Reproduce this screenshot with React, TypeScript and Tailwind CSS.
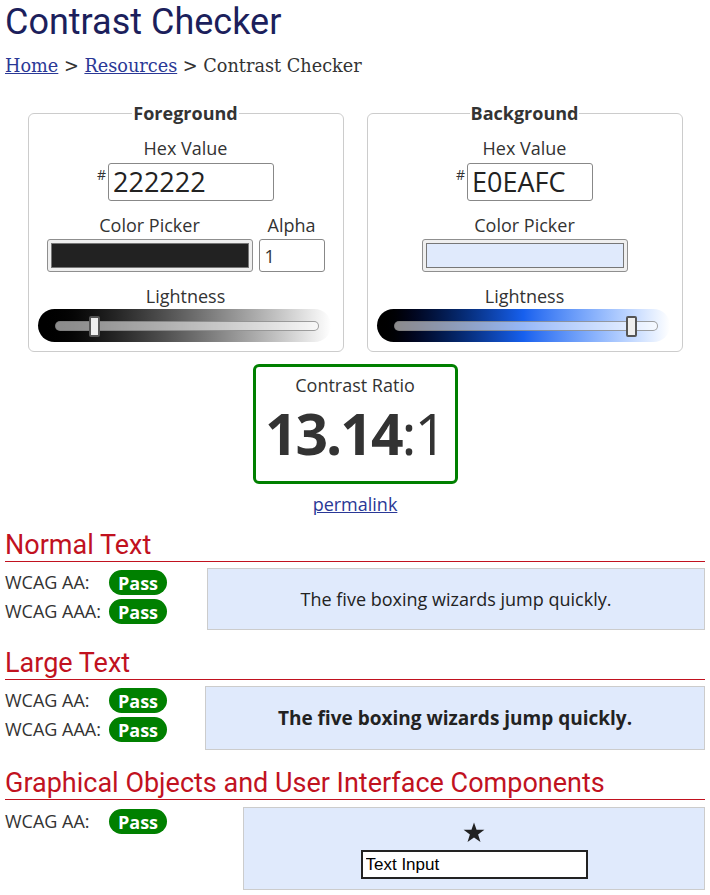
import React from 'react'

const sans = { fontFamily: '"Open Sans", "Liberation Sans", sans-serif' }

function Pass() {
  return (
    <span className="inline-flex items-center justify-center w-[58px] h-[25px] rounded-full bg-[#008000] text-white font-bold text-[18px] leading-none">
      Pass
    </span>
  )
}

function Row({ label }: { label: string }) {
  return (
    <div className="flex items-center h-[29px]">
      <span className="w-[104px] text-[18px] text-[#333]">{label}</span>
      <Pass />
    </div>
  )
}

function Heading({ children }: { children: React.ReactNode }) {
  return (
    <h2
      className="text-[27px] leading-[30px] text-[#c1121f] border-b border-[#c1121f] pb-[1px]"
      style={{ fontFamily: 'Roboto, "Liberation Sans", sans-serif' }}
    >
      {children}
    </h2>
  )
}

function Slider({ pos, blue }: { pos: number; blue?: boolean }) {
  return (
    <div
      className={
        'flex items-center h-[33px] rounded-full ml-[9px] mr-[12px] pl-[17px] pr-[12px] ' +
        (blue ? 'bg-linear-to-r from-black via-[#1760ee] to-white' : 'bg-linear-to-r from-black to-white')
      }
    >
      <div className="relative flex-1 h-[10px] rounded-full bg-white/55 border border-[#777]/70">
        <div
          className="absolute top-[-6px] w-[11px] h-[21px] rounded-[2px] bg-[#eee] border-2 border-[#555]"
          style={{ left: `${pos}%` }}
        />
      </div>
    </div>
  )
}

function Panel({
  title,
  hex,
  hexWidth,
  swatch,
  alpha,
  pos,
  blue,
}: {
  title: string
  hex: string
  hexWidth: string
  swatch: string
  alpha?: boolean
  pos: number
  blue?: boolean
}) {
  return (
    <fieldset className="border border-[#ccc] rounded-[6px] pb-[9px] min-w-0 text-[#333]">
      <legend className="mx-auto px-[1px] text-[18px] font-bold leading-[23px]">{title}</legend>
      <div className="text-center text-[18px] leading-[23px] mt-[12px]">Hex Value</div>
      <div className="flex justify-center items-start mt-[3px]">
        <span className="text-[14px] leading-none mt-[5px] mr-[2px]">#</span>
        <input
          readOnly
          value={hex}
          className={hexWidth + ' h-[38px] border border-[#888] rounded-[3px] text-[27px] px-[4px] text-[#222] outline-none'}
        />
      </div>
      <div className="flex justify-center gap-[6px] mt-[13px]">
        <div className="flex flex-col items-center">
          <span className="text-[18px] leading-[23px]">Color Picker</span>
          <div className="w-[206px] h-[33px] border border-[#8f8f8f] rounded-[3px] bg-[#efefef] p-[3px] mt-[2px]">
            <div className={'h-full border border-[#777] ' + swatch} />
          </div>
        </div>
        {alpha && (
          <div className="flex flex-col items-center">
            <span className="text-[18px] leading-[23px]">Alpha</span>
            <input
              readOnly
              value="1"
              className="w-[66px] h-[33px] border border-[#888] rounded-[3px] text-[18px] px-[5px] mt-[2px] outline-none"
            />
          </div>
        )}
      </div>
      <div className="text-center text-[18px] leading-[23px] mt-[13px]">Lightness</div>
      <div className="mt-[1px]">
        <Slider pos={pos} blue={blue} />
      </div>
    </fieldset>
  )
}

export default function App() {
  return (
    <div className="bg-white min-h-[895px] px-[5px] text-[#333]" style={sans}>
      <h1
        className="text-[36px] leading-[44px] text-[#1c1f5c]"
        style={{ fontFamily: 'Roboto, "Liberation Sans", sans-serif' }}
      >
        Contrast Checker
      </h1>
      <nav className="text-[17.7px] leading-[24px] mt-[10px] text-[#333]" style={{ fontFamily: '"DejaVu Serif", serif' }}>
        <a href="#" className="text-[#2a3896] underline">Home</a> &gt;{' '}
        <a href="#" className="text-[#2a3896] underline">Resources</a> &gt; Contrast Checker
      </nav>

      <div className="w-[655px] mx-auto grid grid-cols-2 gap-[23px] mt-[24px]">
        <Panel title="Foreground" hex="222222" hexWidth="w-[166px]" swatch="bg-[#222]" alpha pos={12.6} />
        <Panel title="Background" hex="E0EAFC" hexWidth="w-[126px]" swatch="bg-[#e0eafc]" pos={88.5} blue />
      </div>

      <div className="flex flex-col items-center mt-[12px]">
        <div className="w-[205px] h-[120px] border-[3px] border-[#008000] rounded-[6px] flex flex-col items-center pt-[7px]">
          <span className="text-[18px] leading-[23px]">Contrast Ratio</span>
          <span className="text-[57px] leading-[64px] tracking-[-0.035em] mt-[4px]">
            <b>13.14</b>:1
          </span>
        </div>
        <a href="#" className="text-[18px] leading-[24px] text-[#2a3896] underline mt-[8px]">permalink</a>
      </div>

      <section className="mt-[14px]">
        <Heading>Normal Text</Heading>
        <div className="flex mt-[6px]">
          <div className="flex flex-col">
            <Row label="WCAG AA:" />
            <Row label="WCAG AAA:" />
          </div>
          <div className="ml-[40px] flex-1 h-[62px] bg-[#e0eafc] border border-[#ccc] flex items-center justify-center text-[18px] text-[#222]">
            The five boxing wizards jump quickly.
          </div>
        </div>
      </section>

      <section className="mt-[18px]">
        <Heading>Large Text</Heading>
        <div className="flex mt-[6px]">
          <div className="flex flex-col">
            <Row label="WCAG AA:" />
            <Row label="WCAG AAA:" />
          </div>
          <div className="ml-[38px] flex-1 h-[64px] bg-[#e0eafc] border border-[#ccc] flex items-center justify-center text-[19px] font-bold text-[#222]">
            The five boxing wizards jump quickly.
          </div>
        </div>
      </section>

      <section className="mt-[18px]">
        <Heading>Graphical Objects and User Interface Components</Heading>
        <div className="flex mt-[7px]">
          <div className="flex flex-col">
            <Row label="WCAG AA:" />
          </div>
          <div className="ml-[76px] flex-1 h-[83px] bg-[#e0eafc] border border-[#ccc] flex flex-col items-center pt-[14px]">
            <svg width="22" height="21" viewBox="0 0 24 23" className="text-[#222]">
              <path
                fill="currentColor"
                d="M12 0.5l2.8 8.1h8.6l-6.9 5.1 2.6 8.3-7.1-5.1-7.1 5.1 2.6-8.3-6.9-5.1h8.6z"
              />
            </svg>
            <input
              readOnly
              value="Text Input"
              className="w-[227px] h-[29px] mt-[7px] border-2 border-[#222] bg-white px-[3px] text-[17px] text-black outline-none"
              style={{ fontFamily: '"Liberation Sans", Arial, sans-serif' }}
            />
          </div>
        </div>
      </section>
    </div>
  )
}
